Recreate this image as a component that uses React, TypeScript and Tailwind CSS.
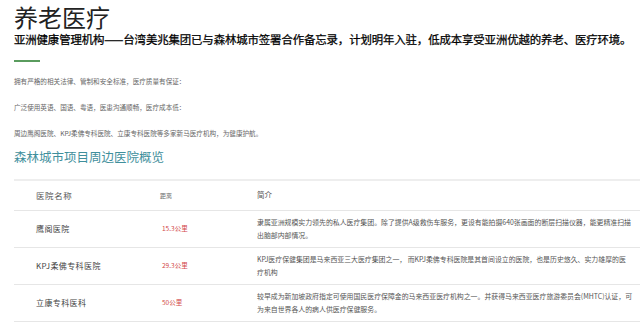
import React from "react";

const rows = [
  {
    name: "鹰阁医院",
    dist: "15.3公里",
    lines: [
      "隶属亚洲规模实力领先的私人医疗集团。除了提供A级救伤车服务，更设有能拍摄640张画面的断层扫描仪器，能更精准扫描",
      "出脑部内部情况。",
    ],
  },
  {
    name: "KPJ柔佛专科医院",
    dist: "29.3公里",
    lines: [
      "KPJ医疗保健集团是马来西亚三大医疗集团之一， 而KPJ柔佛专科医院是其首间设立的医院，也是历史悠久、实力雄厚的医",
      "疗机构",
    ],
  },
  {
    name: "立康专科医科",
    dist: "50公里",
    lines: [
      "较早成为新加坡政府指定可使用国民医疗保障金的马来西亚医疗机构之一。并获得马来西亚医疗旅游委员会(MHTC)认证，可",
      "为来自世界各人的病人供医疗保健服务。",
    ],
  },
];

export default function App() {
  return (
    <div
      className="w-[640px] h-[329px] overflow-hidden bg-white pl-[14px]"
      style={{ fontFamily: '"Noto Sans CJK SC", "Noto Sans", sans-serif' }}
    >
      <h1 className="pt-[1px] text-[24px] leading-[31px] text-[#222] font-normal">养老医疗</h1>
      <p className="-mt-[1px] text-[11.4px] leading-[16px] text-[#000] font-normal [-webkit-text-stroke:0.25px_#000] whitespace-nowrap tracking-[-0.1px]">
        亚洲健康管理机构——台湾美兆集团已与森林城市签署合作备忘录，计划明年入驻，低成本享受亚洲优越的养老、医疗环境。
      </p>
      <div className="mt-[13px] h-[1.5px] w-[26px] bg-[#5a9c5e]" />
      <div className="mt-[14px] flex flex-col gap-[16px] text-[6.6px] leading-[10px] text-[#666]">
        <p>拥有严格的相关法律、管制和安全标准，医疗质量有保证：</p>
        <p>广泛使用英语、国语、粤语，医患沟通顺畅，医疗成本低：</p>
        <p>周边鹰阁医院、KPJ柔佛专科医院、立康专科医院等多家新马医疗机构，为健康护航。</p>
      </div>
      <h2 className="mt-[11px] text-[12.5px] leading-[16px] text-[#3f8f9c]">森林城市项目周边医院概览</h2>
      <div className="mt-[14px] border-t-2 border-[#eeeeee]">
        <div className="grid grid-cols-[146px_97px_1fr] h-[30px] items-center border-b border-[#e6e6e6]">
          <div className="pl-[22px] text-[8.5px] tracking-[0.6px] text-[#555]">医院名称</div>
          <div className="text-[6px] text-[#666]">距离</div>
          <div className="text-[7.5px] text-[#555]">简介</div>
        </div>
        {rows.map((r) => (
          <div
            key={r.name}
            className="grid grid-cols-[146px_97px_1fr] h-[37px] items-center border-b border-[#e6e6e6]"
          >
            <div className="pl-[22px] text-[8px] tracking-[0.4px] text-[#444]">{r.name}</div>
            <div className="pl-[2px] text-[6.5px] text-[#d24848]">{r.dist}</div>
            <div className="text-[6.9px] leading-[13px] text-[#555] whitespace-nowrap">
              {r.lines.map((l, i) => (
                <div key={i}>{l}</div>
              ))}
            </div>
          </div>
        ))}
      </div>
    </div>
  );
}
